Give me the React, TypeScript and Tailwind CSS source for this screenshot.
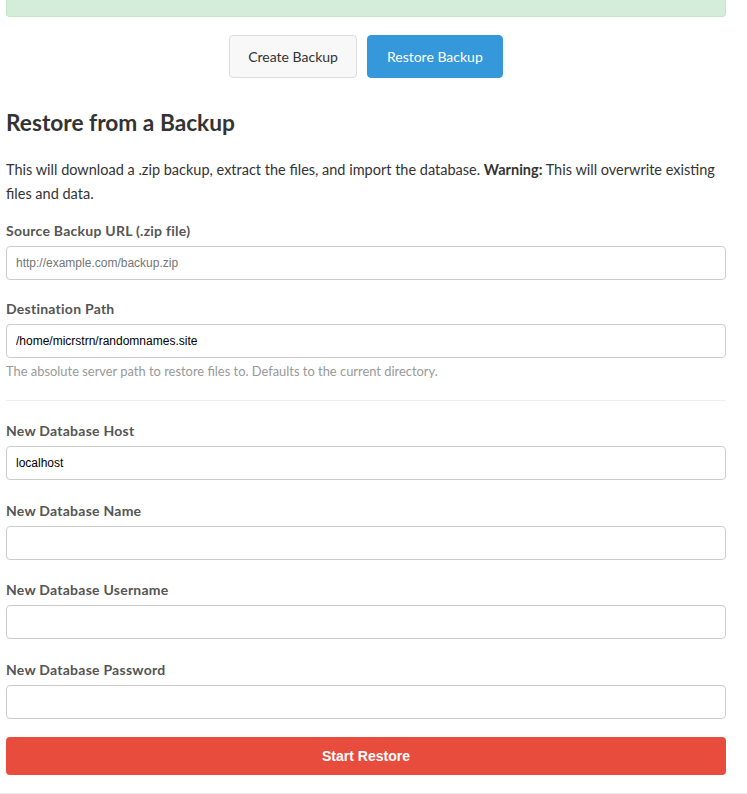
import React from "react";

const labelCls = "block text-[14px] leading-5 font-bold tracking-[0.25px] text-[#555] mb-[5px]";
const inputCls =
  "block w-full h-[34px] px-[9px] border border-[#ccc] rounded-[4px] bg-white text-[12px] text-black placeholder:text-[#757575] font-['Liberation_Sans',Arial,sans-serif] outline-none";

function Field({
  label,
  value,
  placeholder,
  help,
  type = "text",
  gap = "mb-5",
}: {
  label: string;
  value?: string;
  placeholder?: string;
  help?: string;
  type?: string;
  gap?: string;
}) {
  return (
    <div className={gap}>
      <label className={labelCls}>{label}</label>
      <input className={inputCls} type={type} defaultValue={value} placeholder={placeholder} />
      {help && <p className="mt-[5px] text-[12.9px] leading-[17px] text-[#999]">{help}</p>}
    </div>
  );
}

export default function App() {
  return (
    <div className="min-h-[794px] bg-white font-['Lato','Open_Sans',sans-serif] text-[#333]">
      <div className="ml-[6px] w-[720px]">
        {/* success alert, cut off at the top */}
        <div className="h-[17px] rounded-b-[4px] border border-t-0 border-[#c3e6cb] bg-[#d4edda]" />

        {/* tabs */}
        <div className="mt-[18px] flex justify-center gap-[10px]">
          <button className="h-[43px] px-[18px] rounded-[4px] border border-[#ddd] bg-[#f8f8f8] text-[14px] text-[#333]">
            Create Backup
          </button>
          <button className="h-[43px] px-[19px] rounded-[4px] border border-[#3498db] bg-[#3498db] text-[14px] text-white">
            Restore Backup
          </button>
        </div>

        <h2 className="mt-[29px] text-[22.7px] leading-8 font-bold text-[#333]">Restore from a Backup</h2>

        <p className="mt-[19px] mb-[15px] text-[14.5px] leading-6 text-[#333]">
          This will download a .zip backup, extract the files, and import the database.{" "}
          <strong>Warning:</strong> This will overwrite existing files and data.
        </p>

        <Field
          label="Source Backup URL (.zip file)"
          placeholder="http://example.com/backup.zip"
          gap="mb-[19px]"
        />
        <Field
          label="Destination Path"
          value="/home/micrstrn/randomnames.site"
          help="The absolute server path to restore files to. Defaults to the current directory."
        />

        <hr className="mb-5 border-t border-[#eee]" />

        <Field label="New Database Host" value="localhost" gap="mb-[21px]" />
        <Field label="New Database Name" />
        <Field label="New Database Username" gap="mb-[21px]" />
        <div className="mb-[18px]">
          <label className={labelCls}>New Database Password</label>
          <input className={inputCls} type="password" />
        </div>

        <button className="block w-full h-[38px] rounded-[4px] bg-[#e74c3c] text-white text-[14px] font-bold font-['Liberation_Sans',Arial,sans-serif]">
          Start Restore
        </button>
      </div>
      <div className="mt-[18px] border-t border-[#eee]" />
    </div>
  );
}
